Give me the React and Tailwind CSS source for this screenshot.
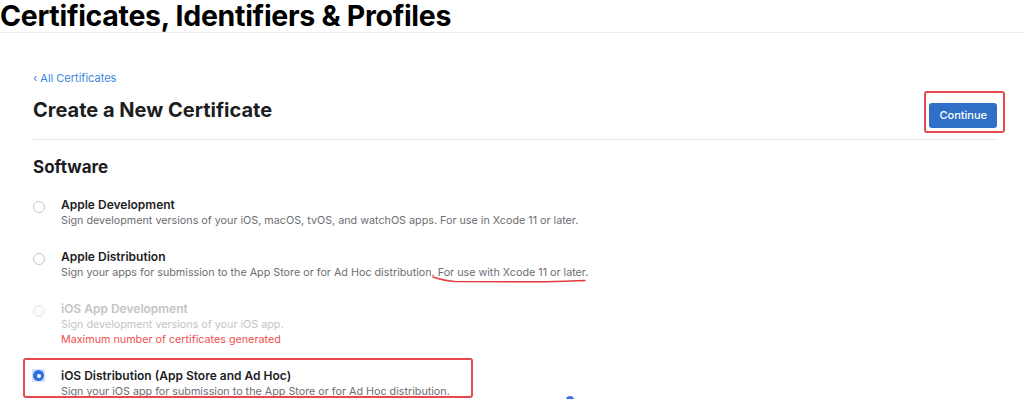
import React from 'react';

const OPTIONS = [
  {
    id: 'apple-dev',
    title: 'Apple Development',
    desc: 'Sign development versions of your iOS, macOS, tvOS, and watchOS apps. For use in Xcode 11 or later.',
  },
  {
    id: 'apple-dist',
    title: 'Apple Distribution',
    desc: 'Sign your apps for submission to the App Store or for Ad Hoc distribution. For use with Xcode 11 or later.',
    underline: true,
  },
  {
    id: 'ios-dev',
    title: 'iOS App Development',
    desc: 'Sign development versions of your iOS app.',
    disabled: true,
    error: 'Maximum number of certificates generated',
  },
  {
    id: 'ios-dist',
    title: 'iOS Distribution (App Store and Ad Hoc)',
    desc: 'Sign your iOS app for submission to the App Store or for Ad Hoc distribution.',
    checked: true,
    boxed: true,
  },
];

function Radio({ checked, disabled }) {
  if (checked) {
    return (
      <span className="-ml-[1px] mt-[2px] flex h-[13px] w-[13px] items-center justify-center bg-[#d3e3fb]">
        <span className="flex h-[11px] w-[11px] items-center justify-center rounded-full bg-[#2f6fe0]">
          <span className="h-[4px] w-[4px] rounded-full bg-white" />
        </span>
      </span>
    );
  }
  return (
    <span
      className={`mt-[5px] block h-[12px] w-[12px] rounded-full border ${
        disabled ? 'border-[#e4e4e4] bg-[#fbfbfb]' : 'border-[#c6c6c6] bg-white'
      }`}
    />
  );
}

function Option({ opt }) {
  return (
    <div className="relative flex">
      {opt.boxed && (
        <span className="pointer-events-none absolute -left-[10px] -top-[9px] h-[40px] w-[450px] rounded-[3px] border-2 border-[#e64a4f]" />
      )}
      <div className="flex w-[28px] shrink-0 items-start">
        <Radio checked={opt.checked} disabled={opt.disabled} />
      </div>
      <div>
        <div
          className={`text-[12px] font-semibold leading-[17px] ${
            opt.disabled ? 'text-[#c4c4c4]' : 'text-[#1d1d1f]'
          }`}
        >
          {opt.title}
        </div>
        <div className={`text-[10.75px] leading-[15px] ${opt.disabled ? 'text-[#c4c4c4]' : 'text-[#6e6e73]'}`}>
          {opt.desc}
        </div>
        {opt.error && <div className="text-[10.75px] leading-[15px] text-[#ef4f4f]">{opt.error}</div>}
      </div>
      {opt.underline && (
        <svg className="absolute left-[398px] top-[27px]" width="190" height="10" viewBox="0 0 190 10" fill="none">
          <path
            d="M2 2 C 8 4, 14 6, 24 6.5 L 108 6.8 C 125 6.7, 140 6, 154 5.5"
            stroke="#e23b3b"
            strokeWidth="1.5"
            strokeLinecap="round"
          />
        </svg>
      )}
    </div>
  );
}

export default function App() {
  return (
    <div className="relative h-[399px] w-[1024px] overflow-hidden bg-white font-['Inter',sans-serif] text-[#1d1d1f]">
      <div className="h-[33px] border-b border-[#ececec]">
        <h1 className="text-[28.5px] font-bold leading-[31px] tracking-[-0.3px] text-black">
          Certificates, Identifiers &amp; Profiles
        </h1>
      </div>

      <div className="pl-[33px] pr-[27px]">
        <div className="pt-[38px] text-[11px] leading-[14px] text-[#3d85e0]">‹ All Certificates</div>

        <div className="mt-[12px] flex items-start justify-between border-b border-[#e6e6e6] pb-[11px]">
          <h2 className="text-[20px] font-bold leading-[26px]">Create a New Certificate</h2>
          <div className="relative mt-[4px]">
            <button className="rounded-[3px] bg-[#2e6fc8] px-[10px] py-[5px] text-[11px] font-medium leading-[15px] text-white">
              Continue
            </button>
            <span className="pointer-events-none absolute -bottom-[5px] -left-[5px] -right-[8px] -top-[10px] rounded-[3px] border-2 border-[#e64a4f]" />
          </div>
        </div>

        <h3 className="mt-[16px] text-[17px] font-bold leading-[22px]">Software</h3>

        <div className="mt-[18px] flex flex-col gap-[20px]">
          {OPTIONS.map((opt) => (
            <Option key={opt.id} opt={opt} />
          ))}
        </div>
      </div>

      <span className="absolute left-[566px] top-[396px] h-[8px] w-[8px] rounded-full bg-[#3c6ff0]" />
    </div>
  );
}
